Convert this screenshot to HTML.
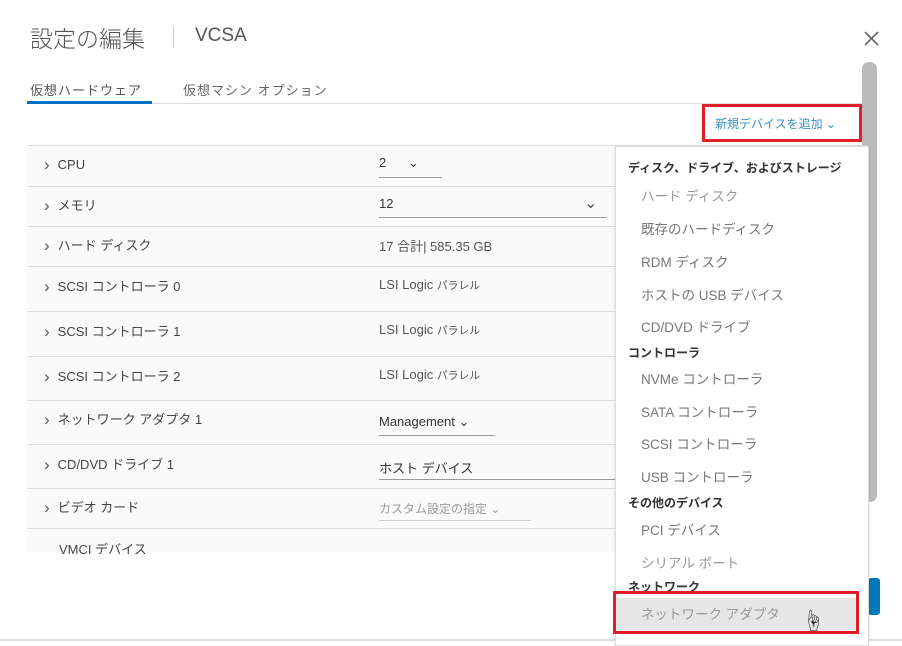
<!DOCTYPE html>
<html><head><meta charset="utf-8"><style>
*{box-sizing:border-box;margin:0;padding:0}
body{width:902px;height:641px;overflow:hidden;background:#fff;font-family:"Liberation Sans","Noto Sans CJK JP",sans-serif;color:#333;position:relative}
.a{position:absolute;white-space:nowrap}
.row{position:absolute;left:27px;width:840px;border-top:1px solid #ddd;background:#fafafa}
.lbl{position:absolute;left:17px;font-size:13px;color:#444}
.lbl:before{content:"›";font-size:17px;color:#555;margin-right:8px;position:relative;top:1px}
.val{position:absolute;left:352px;font-size:13px;color:#555}
.dd{position:absolute;left:641px;font-size:13.5px;color:#777}
.hd{position:absolute;left:628px;font-size:12px;font-weight:bold;color:#333}
</style></head><body>
<div class="a" style="left:30px;top:20px;font-size:23px;color:#555;font-weight:300">設定の編集</div>
<div class="a" style="left:173px;top:26px;width:1px;height:22px;background:#ccc"></div>
<div class="a" style="left:195px;top:25px;font-size:19px;color:#555">VCSA</div>
<svg class="a" style="left:864px;top:31px" width="15" height="15" viewBox="0 0 15 15"><path d="M1 1L14 14M14 1L1 14" stroke="#666" stroke-width="1.6"/></svg>
<div class="a" style="left:30px;top:80px;font-size:13px;color:#555;letter-spacing:1px">仮想ハードウェア</div>
<div class="a" style="left:183px;top:80px;font-size:13px;color:#666;letter-spacing:1px">仮想マシン オプション</div>
<div class="a" style="left:27px;top:103px;width:835px;height:1px;background:#ddd"></div>
<div class="a" style="left:27px;top:101px;width:125px;height:3px;background:#0072c6"></div>
<div class="a" style="left:862px;top:62px;width:15px;height:440px;background:#bbb;border-radius:7px"></div>
<div class="a" style="left:715px;top:115px;font-size:12px;color:#3a8fc8">新規デバイスを追加 ⌄</div>
<div class="a" style="left:702px;top:104px;width:160px;height:38px;border:3px solid #e21d2a"></div>

<div class="a" style="left:27px;top:145px;width:840px;height:407px;background:#fafafa;border-left:1px solid #ddd;overflow:hidden">
</div>
<div class="row" style="top:145px;height:41px"><span class="lbl" style="top:8px">CPU</span><span class="val" style="top:9px;color:#333">2 &nbsp;&nbsp;&nbsp;&nbsp;&nbsp;⌄</span><div class="a" style="left:352px;top:31px;width:63px;height:1px;background:#999"></div></div>
<div class="row" style="top:186px;height:40px"><span class="lbl" style="top:8px">メモリ</span><span class="val" style="top:9px;color:#333">12</span><span class="a" style="left:557px;top:6px;font-size:16px;color:#555">⌄</span><div class="a" style="left:352px;top:30px;width:228px;height:1px;background:#999"></div></div>
<div class="row" style="top:226px;height:40px"><span class="lbl" style="top:8px">ハード ディスク</span><span class="val" style="top:9px">17 合計| 585.35 GB</span></div>
<div class="row" style="top:266px;height:45px"><span class="lbl" style="top:9px">SCSI コントローラ 0</span><span class="val" style="top:10px">LSI Logic <small>パラレル</small></span></div>
<div class="row" style="top:311px;height:45px"><span class="lbl" style="top:9px">SCSI コントローラ 1</span><span class="val" style="top:10px">LSI Logic <small>パラレル</small></span></div>
<div class="row" style="top:356px;height:44px"><span class="lbl" style="top:9px">SCSI コントローラ 2</span><span class="val" style="top:10px">LSI Logic <small>パラレル</small></span></div>
<div class="row" style="top:400px;height:44px"><span class="lbl" style="top:8px">ネットワーク アダプタ 1</span><span class="val" style="top:13px;color:#333">Management ⌄</span><div class="a" style="left:352px;top:34px;width:116px;height:1px;background:#999"></div></div>
<div class="row" style="top:444px;height:44px"><span class="lbl" style="top:9px">CD/DVD ドライブ 1</span><span class="val" style="top:13px;color:#333">ホスト デバイス</span><div class="a" style="left:352px;top:34px;width:240px;height:1px;background:#999"></div></div>
<div class="row" style="top:488px;height:40px"><span class="lbl" style="top:8px">ビデオ カード</span><span class="val" style="top:11px;color:#999;font-size:12px">カスタム設定の指定 ⌄</span><div class="a" style="left:352px;top:31px;width:152px;height:1px;background:#ccc"></div></div>
<div class="row" style="top:528px;height:24px"><span class="a" style="left:32px;top:10px;font-size:13px;color:#444">VMCI デバイス</span></div>
<div class="a" style="left:0;top:554px;width:862px;height:87px;background:#fff"></div>
<div class="a" style="left:868px;top:578px;width:12px;height:37px;background:#0079b8;border-radius:3px"></div>
<div class="a" style="left:0;top:639px;width:902px;height:2px;background:#ddd"></div>

<div class="a" style="left:615px;top:146px;width:254px;height:500px;background:#fff;border:1px solid #ddd;box-shadow:0 1px 3px rgba(0,0,0,.15)"></div>
<div class="hd" style="top:159px">ディスク、ドライブ、およびストレージ</div>
<div class="dd" style="top:185px;color:#999">ハード ディスク</div>
<div class="dd" style="top:218px">既存のハードディスク</div>
<div class="dd" style="top:251px">RDM ディスク</div>
<div class="dd" style="top:284px">ホストの USB デバイス</div>
<div class="dd" style="top:316px">CD/DVD ドライブ</div>
<div class="hd" style="top:344px">コントローラ</div>
<div class="dd" style="top:368px">NVMe コントローラ</div>
<div class="dd" style="top:401px">SATA コントローラ</div>
<div class="dd" style="top:433px">SCSI コントローラ</div>
<div class="dd" style="top:466px">USB コントローラ</div>
<div class="hd" style="top:494px">その他のデバイス</div>
<div class="dd" style="top:519px">PCI デバイス</div>
<div class="dd" style="top:552px;color:#999">シリアル ポート</div>
<div class="hd" style="top:578px">ネットワーク</div>
<div class="a" style="left:616px;top:598px;width:240px;height:32px;background:#e6e6e6"></div>
<div class="dd" style="top:603px;color:#999">ネットワーク アダプタ</div>
<div class="a" style="left:802px;top:604px;font-size:22px;color:#333">☝</div>
<div class="a" style="left:613px;top:591px;width:246px;height:43px;border:3px solid #e21d2a"></div>
</body></html>
